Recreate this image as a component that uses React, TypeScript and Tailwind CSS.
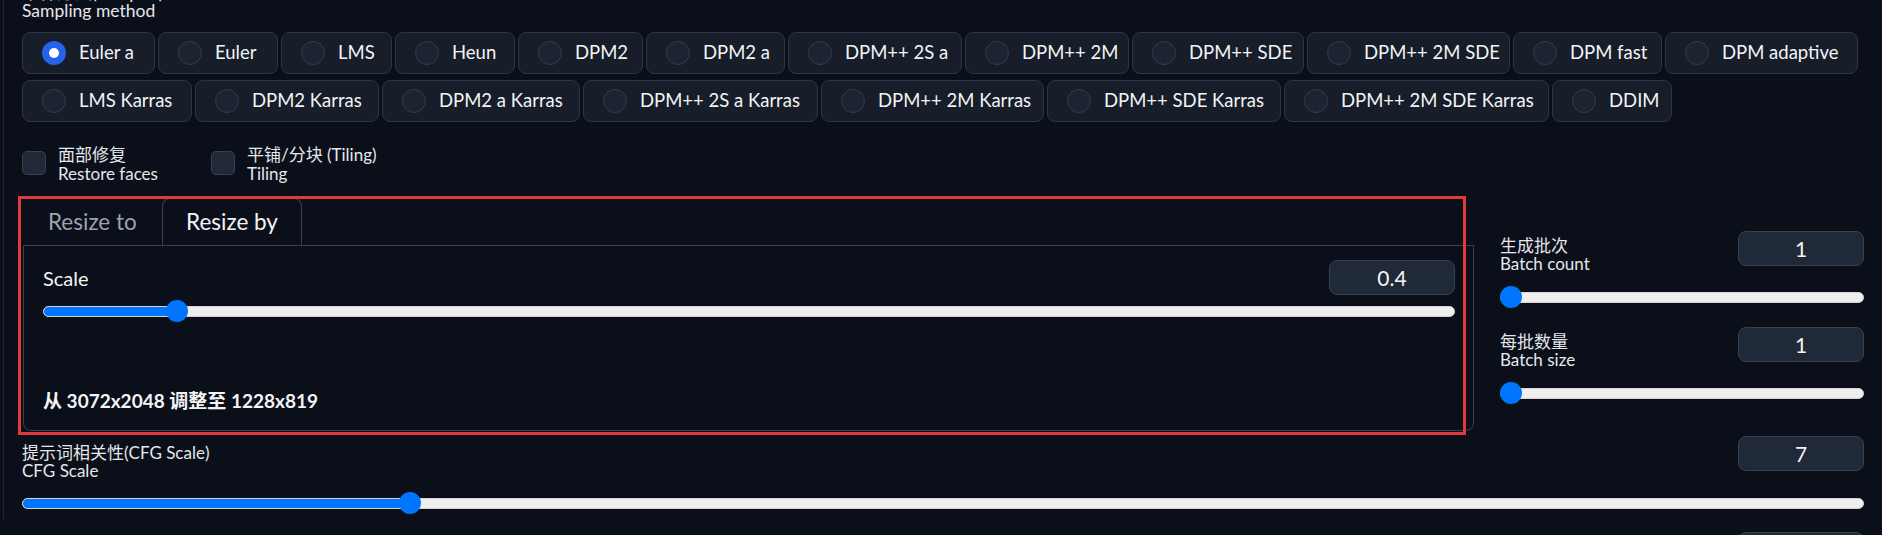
import type { ReactNode } from 'react'

const FONT = "font-['Lato','Noto_Sans_CJK_SC',sans-serif]"

const samplersTop: Array<[string, string]> = [
  ['Euler a', 'w-[133px]'],
  ['Euler', 'w-[120px]'],
  ['LMS', 'w-[111px]'],
  ['Heun', 'w-[120px]'],
  ['DPM2', 'w-[125px]'],
  ['DPM2 a', 'w-[139px]'],
  ['DPM++ 2S a', 'w-[174px]'],
  ['DPM++ 2M', 'w-[164px]'],
  ['DPM++ SDE', 'w-[172px]'],
  ['DPM++ 2M SDE', 'w-[203px]'],
  ['DPM fast', 'w-[149px]'],
  ['DPM adaptive', 'w-[193px]'],
]

const samplersBottom: Array<[string, string]> = [
  ['LMS Karras', 'w-[170px]'],
  ['DPM2 Karras', 'w-[184px]'],
  ['DPM2 a Karras', 'w-[198px]'],
  ['DPM++ 2S a Karras', 'w-[235px]'],
  ['DPM++ 2M Karras', 'w-[223px]'],
  ['DPM++ SDE Karras', 'w-[234px]'],
  ['DPM++ 2M SDE Karras', 'w-[265px]'],
  ['DDIM', 'w-[120px]'],
]

function Radio({ label, width, checked }: { label: string; width: string; checked?: boolean }) {
  return (
    <div className={`${width} h-[42px] flex items-center gap-[13px] pl-[19px] rounded-lg border border-[#2d3545] bg-[#171d29] text-[18.5px] text-[#f3f4f6] whitespace-nowrap`}>
      {checked ? (
        <span className="w-6 h-6 rounded-full bg-[#2563eb] flex items-center justify-center shrink-0">
          <span className="w-[10px] h-[10px] rounded-full bg-white" />
        </span>
      ) : (
        <span className="w-6 h-6 rounded-full bg-[#1c2331] border border-[#353d4c] shrink-0" />
      )}
      <span>{label}</span>
    </div>
  )
}

function Label({ zh, en }: { zh: string; en: string }) {
  return (
    <div className="text-[17px] leading-[18px] text-[#e5e7eb] whitespace-nowrap">
      <div>{zh}</div>
      <div>{en}</div>
    </div>
  )
}

function Checkbox({ zh, en }: { zh: string; en: string }) {
  return (
    <div className="flex items-start gap-3">
      <span className="mt-[6px] w-6 h-6 rounded-[5px] bg-[#1f2937] border border-[#374151]" />
      <div className="text-[17px] leading-[19px] text-[#e5e7eb] whitespace-nowrap">
        <div>{zh}</div>
        <div>{en}</div>
      </div>
    </div>
  )
}

function NumberBox({ value }: { value: string }) {
  return (
    <div className="w-[126px] h-[35px] rounded-lg border border-[#374151] bg-[#1f2937] flex items-center justify-center text-[21px] text-[#f3f4f6] shrink-0">
      {value}
    </div>
  )
}

// native-looking range input: blue fill up to the thumb, light track after
function Slider({ pct }: { pct: number }) {
  const thumb = `calc(${pct}% - ${pct * 0.22}px)`
  return (
    <div className="relative h-[22px] flex items-center">
      <div className="w-full h-[11px] rounded-full bg-[#efefef] border border-[#d4d4d4] overflow-hidden">
        <div className="h-full bg-[#0075ff]" style={{ width: `calc(${thumb} + 11px)` }} />
      </div>
      <span className="absolute top-0 w-[22px] h-[22px] rounded-full bg-[#0075ff]" style={{ left: thumb }} />
    </div>
  )
}

function Tab({ children, active }: { children: ReactNode; active?: boolean }) {
  return active ? (
    <div className="relative -mb-px w-[140px] h-[47px] flex items-center justify-center rounded-t-lg border border-b-0 border-[#374151] bg-[#0b0f19] text-[22.5px] text-[#f3f4f6]">
      {children}
    </div>
  ) : (
    <div className="w-[139px] h-[47px] pl-[25px] flex items-center text-[22.5px] text-[#9ca3af]">{children}</div>
  )
}

export default function App() {
  return (
    <div className={`${FONT} w-[1882px] h-[535px] overflow-hidden bg-[#0b0f19] pl-[3px]`}>
      <div className="h-full border-l border-[#1f2633] pl-[18px] pr-[18px]">
        {/* Sampling method */}
        <div className="-mt-[16px] text-[17.5px] leading-[18px] text-[#e5e7eb]">
          <div>采样方法(Sampler)</div>
          <div>Sampling method</div>
        </div>
        <div className="mt-[12px] flex flex-col gap-[6px]">
          <div className="flex gap-[3px]">
            {samplersTop.map(([l, w], i) => <Radio key={l} label={l} width={w} checked={i === 0} />)}
          </div>
          <div className="flex gap-[3px]">
            {samplersBottom.map(([l, w]) => <Radio key={l} label={l} width={w} />)}
          </div>
        </div>

        <div className="mt-[23px] flex gap-[53px]">
          <Checkbox zh="面部修复" en="Restore faces" />
          <Checkbox zh="平铺/分块 (Tiling)" en="Tiling" />
        </div>

        <div className="mt-[15px] flex gap-[26px]">
          {/* Resize tabs */}
          <div className="relative w-[1452px] pl-px">
            <div className="flex">
              <Tab>Resize to</Tab>
              <Tab active>Resize by</Tab>
            </div>
            <div className="border border-[#374151] rounded-b-lg pt-[14px] pl-[19px] pr-[18px] pb-[17px]">
              <div className="flex items-center justify-between">
                <span className="text-[20px] text-[#f3f4f6]">Scale</span>
                <NumberBox value="0.4" />
              </div>
              <div className="mt-[5px]">
                <Slider pct={8.86} />
              </div>
              <div className="mt-[67px] text-[19px] leading-6 font-bold text-[#f3f4f6]">
                从 3072x2048 调整至 1228x819
              </div>
            </div>
            <div className="absolute -left-[4px] -top-[2px] w-[1448px] h-[239px] border-[3px] border-[#e0393e] pointer-events-none" />
          </div>

          {/* Batch settings */}
          <div className="w-[364px] pt-[33px]">
            <div className="flex items-start justify-between">
              <div className="mt-[6px]"><Label zh="生成批次" en="Batch count" /></div>
              <NumberBox value="1" />
            </div>
            <div className="mt-[13px]"><Slider pct={0} /></div>
            <div className="mt-[19px] flex items-start justify-between">
              <div className="mt-[6px]"><Label zh="每批数量" en="Batch size" /></div>
              <NumberBox value="1" />
            </div>
            <div className="mt-[13px]"><Slider pct={0} /></div>
          </div>
        </div>

        {/* CFG scale */}
        <div className="mt-[5px]">
          <div className="flex items-start justify-between">
            <div className="mt-[8px]"><Label zh="提示词相关性(CFG Scale)" en="CFG Scale" /></div>
            <NumberBox value="7" />
          </div>
          <div className="mt-[12px]"><Slider pct={20.7} /></div>
          <div className="mt-[18px] flex justify-end">
            <NumberBox value="" />
          </div>
        </div>
      </div>
    </div>
  )
}
